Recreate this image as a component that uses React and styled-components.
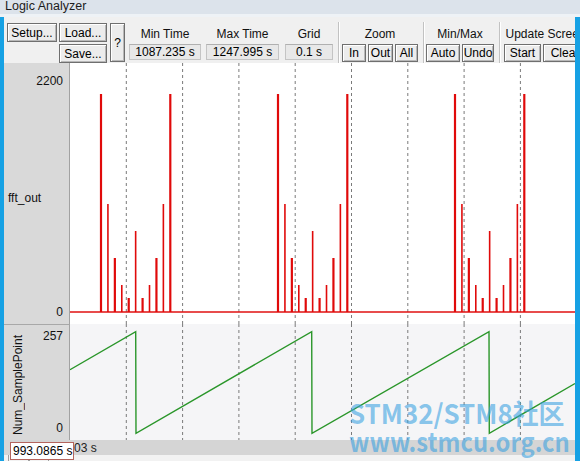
import styled, { createGlobalStyle } from 'styled-components'

const GlobalStyle = createGlobalStyle`
  html, body {
    margin: 0;
    padding: 0;
    background: #f0f0f0;
  }
`

const GRID_X = [56.3, 112.6, 168.9, 225.2, 281.5, 337.8, 394.1, 450.4]
const GROUP_START = [31, 208, 385]
const BAR_TOPS = [31, 141, 195, 222, 235, 168, 235, 222, 195, 141, 31]
const BASELINE = 249
const SAW = '0,45.7 65.7,7.7 66,109.3 241.7,7.7 242,109.3 419,7.7 419.3,109.3 505,59.5'

export default function App() {
  return (
    <>
      <GlobalStyle />
      <Window>
        <TitleBar>Logic Analyzer</TitleBar>
        <Body>
          <Toolbar>
            <Button $w={50} $mr={2}>Setup...</Button>
            <Stack $mr={3}>
              <Button $w={48}>Load...</Button>
              <Button $w={48}>Save...</Button>
            </Stack>
            <Button $w={15} $h={39} $mr={4}>?</Button>
            <Field $w={72} $mr={5}>
              <GroupLabel>Min Time</GroupLabel>
              <ValueBox>1087.235 s</ValueBox>
            </Field>
            <Field $w={73} $mr={6}>
              <GroupLabel>Max Time</GroupLabel>
              <ValueBox>1247.995 s</ValueBox>
            </Field>
            <Field $w={48} $mr={5}>
              <GroupLabel>Grid</GroupLabel>
              <ValueBox>0.1 s</ValueBox>
            </Field>
            <Separator $mr={2} />
            <Field $mr={5}>
              <GroupLabel>Zoom</GroupLabel>
              <ButtonRow>
                <Button $w={24} $h={18}>In</Button>
                <Button $w={25} $h={18}>Out</Button>
                <Button $w={23} $h={18}>All</Button>
              </ButtonRow>
            </Field>
            <Separator $mr={1} />
            <Field $mr={5}>
              <GroupLabel>Min/Max</GroupLabel>
              <ButtonRow>
                <Button $w={34} $h={18}>Auto</Button>
                <Button $w={32} $h={18}>Undo</Button>
              </ButtonRow>
            </Field>
            <Separator $mr={3} />
            <Field>
              <GroupLabel>Update Screen</GroupLabel>
              <ButtonRow>
                <Button $w={37} $h={18}>Start</Button>
                <Button $w={44} $h={18}>Clear</Button>
              </ButtonRow>
            </Field>
          </Toolbar>

          <Trace $h={261}>
            <LabelCol>
              <Scale>2200</Scale>
              <SignalName>fft_out</SignalName>
              <Scale>0</Scale>
            </LabelCol>
            <Plot $bg="#ffffff">
              <svg width="505" height="261" viewBox="0 0 505 261">
                {GRID_X.map((x) => (
                  <GridLine key={x} x1={x} x2={x} y1={0} y2={261} />
                ))}
                <line x1="0" x2="505" y1={BASELINE} y2={BASELINE} stroke="#e01010" strokeWidth="1.6" />
                {GROUP_START.map((start) =>
                  BAR_TOPS.map((top, i) => {
                    const x = start + i * 6.93
                    return (
                      <line
                        key={`${start}-${i}`}
                        x1={x}
                        x2={x}
                        y1={top}
                        y2={BASELINE}
                        stroke="#e00a0a"
                        strokeWidth={i % 2 ? 1.6 : 2.2}
                      />
                    )
                  })
                )}
              </svg>
            </Plot>
          </Trace>

          <Trace $h={116}>
            <LabelCol $top>
              <VerticalName>Num_SamplePoint</VerticalName>
              <ScaleCol>
                <Scale>257</Scale>
                <Scale>0</Scale>
              </ScaleCol>
            </LabelCol>
            <Plot $bg="#f5f5f7">
              <svg width="505" height="116" viewBox="0 0 505 116">
                {GRID_X.map((x) => (
                  <GridLine key={x} x1={x} x2={x} y1={0} y2={116} />
                ))}
                <polyline points={SAW} fill="none" stroke="#2a962a" strokeWidth="1.4" />
              </svg>
            </Plot>
          </Trace>

          <TimeBar>
            <TimeBox>993.0865 s</TimeBox>
            <TimeText>03 s</TimeText>
          </TimeBar>
          <ScrollRow>
            <ScrollThumb $w={19} />
            <ScrollThumb $w={18} />
          </ScrollRow>
        </Body>

        <Watermark>
          <WatermarkTitle>STM32/STM8社区</WatermarkTitle>
          <WatermarkUrl>www.stmcu.org.cn</WatermarkUrl>
        </Watermark>
      </Window>
    </>
  )
}

const Window = styled.div`
  position: relative;
  width: 580px;
  height: 461px;
  display: flex;
  flex-direction: column;
  overflow: hidden;
  background: #f0f0f0;
  font-family: "Liberation Sans", Arial, sans-serif;
  font-size: 12px;
  color: #000;
`

const TitleBar = styled.div`
  height: 17px;
  flex-shrink: 0;
  box-sizing: border-box;
  padding: 0 0 0 5px;
  background: linear-gradient(#dce3eb 0, #dce3eb 14px, #eef2f6 14px);
  font-size: 12.5px;
  line-height: 13px;
  color: #1c1c1c;
`

const Body = styled.div`
  flex: 1;
  display: flex;
  flex-direction: column;
  min-height: 0;
  border-left: 4px solid #16a1e4;
  border-right: 5px solid #16a1e4;
  overflow: hidden;
`

const Toolbar = styled.div`
  height: 46px;
  flex-shrink: 0;
  box-sizing: border-box;
  display: flex;
  align-items: flex-start;
  padding: 6px 0 0 3px;
  background: #f0f0f0;
  overflow: hidden;
`

const Button = styled.button`
  flex-shrink: 0;
  width: ${(p) => p.$w}px;
  height: ${(p) => p.$h || 19}px;
  margin-right: ${(p) => p.$mr || 0}px;
  padding: 0;
  box-sizing: border-box;
  background: #ececec;
  border: 1px solid #6f6f6f;
  box-shadow: inset 1px 1px 0 #ffffff, inset -1px -1px 0 #b8b8b8;
  font-family: inherit;
  font-size: 12px;
  color: #000;
  line-height: 14px;
  white-space: nowrap;
  overflow: hidden;
`

const Stack = styled.div`
  flex-shrink: 0;
  display: flex;
  flex-direction: column;
  gap: 2px;
  margin-right: ${(p) => p.$mr || 0}px;
`

const Field = styled.div`
  flex-shrink: 0;
  display: flex;
  flex-direction: column;
  ${(p) => (p.$w ? `width: ${p.$w}px;` : '')}
  margin-right: ${(p) => p.$mr || 0}px;
`

const GroupLabel = styled.div`
  height: 21px;
  display: flex;
  align-items: center;
  justify-content: center;
  white-space: nowrap;
  color: #111;
`

const ValueBox = styled.div`
  height: 16px;
  box-sizing: border-box;
  border: 1px solid #c4c4c4;
  border-top-color: #b0b0b0;
  background: #e8e8e8;
  text-align: center;
  line-height: 14px;
  white-space: nowrap;
`

const ButtonRow = styled.div`
  display: flex;
  gap: 2px;
`

const Separator = styled.div`
  flex-shrink: 0;
  width: 2px;
  height: 41px;
  margin-top: -1px;
  margin-right: ${(p) => p.$mr || 0}px;
  box-sizing: border-box;
  border-left: 1px solid #c2c2c2;
  border-right: 1px solid #ffffff;
`

const Trace = styled.div`
  height: ${(p) => p.$h}px;
  flex-shrink: 0;
  display: flex;
`

const LabelCol = styled.div`
  width: 66px;
  flex-shrink: 0;
  box-sizing: border-box;
  display: flex;
  flex-direction: ${(p) => (p.$top ? 'row' : 'column')};
  justify-content: space-between;
  padding: ${(p) => (p.$top ? '4px 6px 5px 7px' : '11px 6px 5px 4px')};
  background: #d9d9d9;
  border-right: 1px solid #a2a2a2;
  ${(p) => (p.$top ? 'border-top: 1px solid #a8a8a8;' : '')}
`

const Scale = styled.div`
  text-align: right;
  line-height: 14px;
  color: #111;
`

const SignalName = styled.div`
  line-height: 14px;
  color: #111;
  margin-top: 2px;
`

const ScaleCol = styled.div`
  flex: 1;
  display: flex;
  flex-direction: column;
  justify-content: space-between;
`

const VerticalName = styled.div`
  writing-mode: vertical-rl;
  transform: rotate(180deg);
  line-height: 14px;
  color: #111;
  white-space: nowrap;
`

const Plot = styled.div`
  flex: 1;
  background: ${(p) => p.$bg};
  overflow: hidden;

  svg {
    display: block;
  }
`

const GridLine = styled.line`
  stroke: #7a7a7a;
  stroke-width: 1;
  stroke-dasharray: 3 3;
`

const TimeBar = styled.div`
  height: 15px;
  flex-shrink: 0;
  display: flex;
  align-items: flex-start;
  padding-left: 6px;
  background: #d5d5d5;
`

const TimeBox = styled.div`
  position: relative;
  z-index: 1;
  width: 64px;
  height: 18px;
  margin-top: 2px;
  box-sizing: border-box;
  border: 1px solid #b4645c;
  background: #ffffff;
  padding-left: 2px;
  line-height: 16px;
  white-space: nowrap;
  overflow: hidden;
`

const TimeText = styled.div`
  margin-top: 1px;
  line-height: 14px;
  color: #222;
`

const ScrollRow = styled.div`
  flex: 1;
  display: flex;
  padding-left: 4px;
  background: #f2f2f2;
`

const ScrollThumb = styled.div`
  width: ${(p) => p.$w}px;
  border-left: 1px solid #a0a0a0;
  border-right: 1px solid #a0a0a0;
`

const Watermark = styled.div`
  position: absolute;
  left: 349px;
  top: 398px;
  display: flex;
  flex-direction: column;
  color: rgba(52, 158, 224, 0.58);
  font-family: "Noto Sans CJK SC", "DejaVu Sans", sans-serif;
  font-weight: 700;
  pointer-events: none;
`

const WatermarkTitle = styled.div`
  font-size: 27px;
  line-height: 30px;
  white-space: nowrap;
  transform: scaleX(0.96);
  transform-origin: left center;
`

const WatermarkUrl = styled.div`
  font-size: 27px;
  line-height: 26px;
  white-space: nowrap;
  transform: scaleX(0.88);
  transform-origin: left center;
`
